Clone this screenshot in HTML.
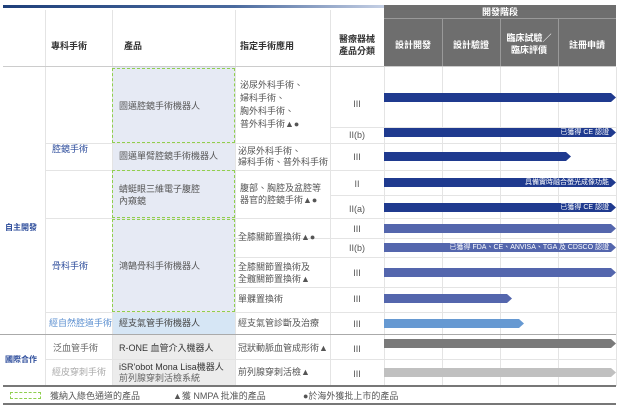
<!DOCTYPE html>
<html><head><meta charset="utf-8"><style>
*{margin:0;padding:0;box-sizing:border-box}
body{width:640px;height:408px;background:#fff;position:relative;overflow:hidden;font-family:"Liberation Sans","Noto Sans CJK TC",sans-serif;color:#555}
.a{position:absolute}
.t{position:absolute;font-size:9px;line-height:12px;white-space:nowrap}
.h{font-weight:bold;color:#333;font-size:9px}
.hl{background:#e7e7e7}
.vl{position:absolute;width:1px;background:#e4e4e4}
.hz{position:absolute;height:1px;background:#e4e4e4}
.bar{position:absolute;height:9px;clip-path:polygon(0 0,calc(100% - 5px) 0,100% 50%,calc(100% - 5px) 100%,0 100%);color:#fff;font-size:7px;line-height:9px;text-align:right;padding-right:7px;white-space:nowrap}
.dash{position:absolute;border:1px dashed #8fcf4f}
.c{text-align:center;width:54px;left:330px}
</style></head><body>
<div class="a" style="left:3px;top:5px;width:385px;height:3px;background:linear-gradient(90deg,#1e3f7a,#4a6a9e 60%,#c8d2e6)"></div>
<div class="a" style="left:384px;top:5px;width:232px;height:62px;background:#6e6e6e"></div>
<div class="t" style="left:384px;top:6px;width:232px;text-align:center;color:#fff;font-weight:bold">開發階段</div>
<div class="a" style="left:384px;top:18px;width:232px;height:1px;background:#999"></div>
<div class="a" style="left:442px;top:19px;width:1px;height:48px;background:#999"></div>
<div class="a" style="left:500px;top:19px;width:1px;height:48px;background:#999"></div>
<div class="a" style="left:558px;top:19px;width:1px;height:48px;background:#999"></div>
<div class="t" style="left:384px;top:39px;width:58px;text-align:center;color:#fff;font-weight:bold">設計開發</div>
<div class="t" style="left:442px;top:39px;width:58px;text-align:center;color:#fff;font-weight:bold">設計驗證</div>
<div class="t" style="left:500px;top:32px;width:58px;text-align:center;color:#fff;font-weight:bold">臨床試驗／<br>臨床評價</div>
<div class="t" style="left:558px;top:39px;width:58px;text-align:center;color:#fff;font-weight:bold">註冊申請</div>
<div class="t h" style="left:51px;top:40px">專科手術</div>
<div class="t h" style="left:124px;top:40px">產品</div>
<div class="t h" style="left:240px;top:40px">指定手術應用</div>
<div class="t h" style="left:330px;top:33px;width:54px;text-align:center">醫療器械<br>產品分類</div>
<!-- column lines -->
<div class="vl" style="left:45px;top:10px;height:376px"></div>
<div class="vl" style="left:112px;top:10px;height:376px"></div>
<div class="vl" style="left:235px;top:10px;height:376px"></div>
<div class="vl" style="left:330px;top:10px;height:376px"></div>
<div class="vl" style="left:384px;top:67px;height:319px"></div>
<div class="vl" style="left:442px;top:67px;height:319px"></div>
<div class="vl" style="left:500px;top:67px;height:319px"></div>
<div class="vl" style="left:558px;top:67px;height:319px"></div>
<div class="vl" style="left:616px;top:67px;height:319px"></div>
<div class="a" style="left:3px;top:66px;width:613px;height:1px;background:#ccc"></div>
<!-- product fills -->
<div class="a" style="left:113px;top:67px;width:122px;height:245px;background:#e6eaf4"></div>
<div class="a" style="left:113px;top:312px;width:122px;height:22px;background:#d6e6f5"></div>
<div class="a" style="left:113px;top:335px;width:122px;height:51px;background:#ececec"></div>
<!-- row lines -->
<div class="hz" style="left:330px;top:127px;width:286px"></div>
<div class="hz" style="left:45px;top:143px;width:571px"></div>
<div class="hz" style="left:45px;top:170px;width:571px"></div>
<div class="hz" style="left:330px;top:195px;width:286px"></div>
<div class="hz" style="left:45px;top:218px;width:571px"></div>
<div class="hz" style="left:235px;top:238px;width:381px"></div>
<div class="hz" style="left:235px;top:257px;width:381px"></div>
<div class="hz" style="left:235px;top:287px;width:381px"></div>
<div class="hz" style="left:45px;top:312px;width:571px"></div>
<div class="a" style="left:0;top:334px;width:616px;height:1px;background:#aaa"></div>
<div class="hz" style="left:45px;top:359px;width:571px"></div>
<div class="a" style="left:3px;top:385px;width:613px;height:2px;background:#777"></div>
<div class="a" style="left:3px;top:403px;width:613px;height:2px;background:#777"></div>
<!-- dashed -->
<div class="dash" style="left:112px;top:68px;width:123px;height:75px"></div>
<div class="dash" style="left:112px;top:170px;width:123px;height:48px"></div>
<div class="dash" style="left:112px;top:219px;width:123px;height:93px"></div>
<!-- left labels -->
<div class="t" style="left:5px;top:222px;color:#2a4a9a;font-weight:bold;font-size:8px">自主開發</div>
<div class="t" style="left:5px;top:354px;color:#2a4a9a;font-weight:bold;font-size:8px">國際合作</div>
<div class="t" style="left:52px;top:143px;color:#2a4a9a">腔鏡手術</div>
<div class="t" style="left:52px;top:260px;color:#2a4a9a">骨科手術</div>
<div class="t" style="left:49px;top:317px;color:#5b8fd0">經自然腔道手術</div>
<div class="t" style="left:53px;top:342px;color:#666">泛血管手術</div>
<div class="t" style="left:52px;top:366px;color:#aaa">經皮穿刺手術</div>
<!-- products -->
<div class="t" style="left:119px;top:100px">圖邁腔鏡手術機器人</div>
<div class="t" style="left:119px;top:150px">圖邁單臂腔鏡手術機器人</div>
<div class="t" style="left:119px;top:183px">蜻蜓眼三維電子腹腔<br>內窺鏡</div>
<div class="t" style="left:119px;top:260px">鴻鵠骨科手術機器人</div>
<div class="t" style="left:119px;top:317px;color:#444">經支氣管手術機器人</div>
<div class="t" style="left:119px;top:342px;color:#333">R-ONE 血管介入機器人</div>
<div class="t" style="left:119px;top:362px;color:#333;line-height:11px">iSR'obot Mona Lisa機器人<br><span style="color:#666">前列腺穿刺活檢系統</span></div>
<!-- applications -->
<div class="t" style="left:240px;top:79px;line-height:13px">泌尿外科手術、<br>婦科手術、<br>胸外科手術、<br>普外科手術▲●</div>
<div class="t" style="left:238px;top:146px;line-height:11px">泌尿外科手術、<br>婦科手術、普外科手術</div>
<div class="t" style="left:240px;top:182px">腹部、胸腔及盆腔等<br>器官的腔鏡手術▲●</div>
<div class="t" style="left:238px;top:231px">全膝關節置換術▲●</div>
<div class="t" style="left:238px;top:261px">全膝關節置換術及<br>全髖關節置換術▲</div>
<div class="t" style="left:238px;top:293px">單髁置換術</div>
<div class="t" style="left:238px;top:317px">經支氣管診斷及治療</div>
<div class="t" style="left:238px;top:342px">冠狀動脈血管成形術▲</div>
<div class="t" style="left:238px;top:366px">前列腺穿刺活檢▲</div>
<!-- classes -->
<div class="t c" style="top:98px">III</div>
<div class="t c" style="top:129px">II(b)</div>
<div class="t c" style="top:151px">III</div>
<div class="t c" style="top:178px">II</div>
<div class="t c" style="top:203px">II(a)</div>
<div class="t c" style="top:223px">III</div>
<div class="t c" style="top:242px">II(b)</div>
<div class="t c" style="top:267px">III</div>
<div class="t c" style="top:293px">III</div>
<div class="t c" style="top:318px">III</div>
<div class="t c" style="top:343px">III</div>
<div class="t c" style="top:368px">III</div>
<!-- bars -->
<div class="bar" style="left:384px;top:93px;width:232px;background:#1f3a8f"></div>
<div class="bar" style="left:384px;top:128px;width:232px;background:#1f3a8f">已獲得 CE 認證</div>
<div class="bar" style="left:384px;top:152px;width:187px;background:#1f3a8f"></div>
<div class="bar" style="left:384px;top:178px;width:232px;background:#1f3a8f">具備實時融合螢光成像功能</div>
<div class="bar" style="left:384px;top:203px;width:232px;background:#1f3a8f">已獲得 CE 認證</div>
<div class="bar" style="left:384px;top:224px;width:232px;background:#5466ad"></div>
<div class="bar" style="left:384px;top:243px;width:232px;background:#5466ad">已獲得 FDA、CE、ANVISA、TGA 及 CDSCO 認證</div>
<div class="bar" style="left:384px;top:268px;width:232px;background:#5466ad"></div>
<div class="bar" style="left:384px;top:294px;width:128px;background:#5466ad"></div>
<div class="bar" style="left:384px;top:319px;width:140px;background:#6699d2"></div>
<div class="bar" style="left:384px;top:339px;width:232px;background:#7a7a7a"></div>
<div class="bar" style="left:384px;top:368px;width:232px;background:#c0c0c0"></div>
<!-- legend -->
<div class="a" style="left:10px;top:392px;width:31px;height:7px;border:1px dashed #8fcf4f"></div>
<div class="t" style="left:50px;top:390px">獲納入綠色通道的產品</div>
<div class="t" style="left:173px;top:390px">▲獲 NMPA 批准的產品</div>
<div class="t" style="left:303px;top:390px">●於海外獲批上市的產品</div>
</body></html>
